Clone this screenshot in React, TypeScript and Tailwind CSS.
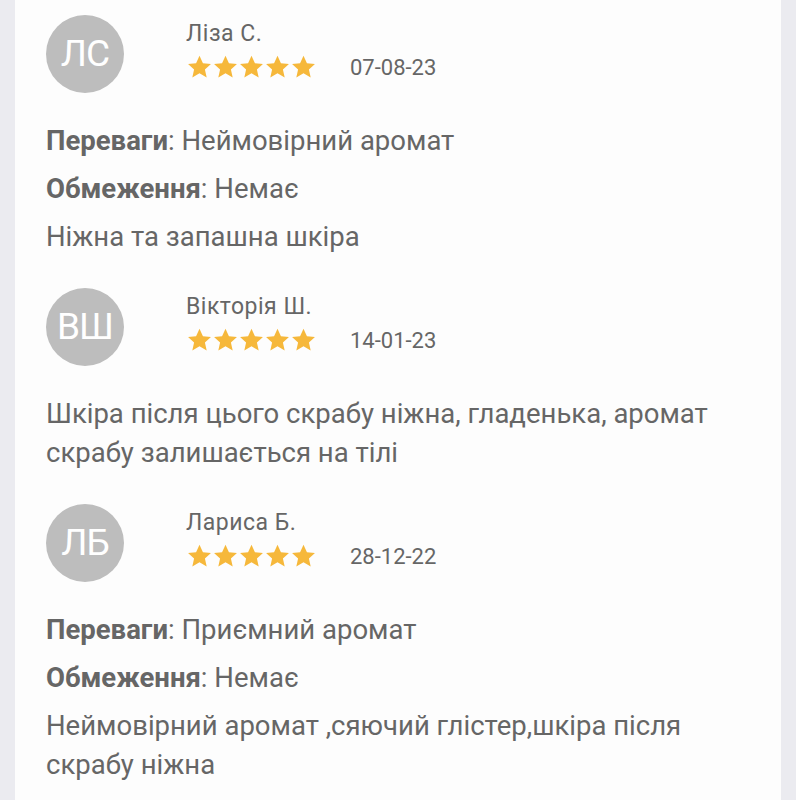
type Review = {
  initials: string;
  name: string;
  date: string;
  pros?: string;
  cons?: string;
  text: string[];
};

const reviews: Review[] = [
  {
    initials: "ЛС",
    name: "Ліза С.",
    date: "07-08-23",
    pros: "Неймовірний аромат",
    cons: "Немає",
    text: ["Ніжна та запашна шкіра"],
  },
  {
    initials: "ВШ",
    name: "Вікторія Ш.",
    date: "14-01-23",
    text: ["Шкіра після цього скрабу ніжна, гладенька, аромат", "скрабу залишається на тілі"],
  },
  {
    initials: "ЛБ",
    name: "Лариса Б.",
    date: "28-12-22",
    pros: "Приємний аромат",
    cons: "Немає",
    text: ["Неймовірний аромат ,сяючий глістер,шкіра після", "скрабу ніжна"],
  },
];

const Star = () => (
  <svg width="25" height="24" viewBox="0 0 24 23" className="shrink-0">
    <path
      d="M12 0.8l3.3 7.1 7.7 0.8-5.8 5.2 1.7 7.6L12 17.6l-6.9 3.9 1.7-7.6L1 8.7l7.7-0.8z"
      fill="#f6b83b"
    />
  </svg>
);

const ReviewItem = ({ review }: { review: Review }) => {
  return (
    <div>
      {/* header */}
      <div className="flex items-start">
        <div className="w-[78px] h-[78px] rounded-full bg-[#bdbdbd] flex items-center justify-center text-white text-[37px] tracking-[-1px] shrink-0">
          {review.initials}
        </div>
        <div className="ml-[62px] pt-[5px]">
          <div className="text-[23px] leading-[28px] tracking-[0.5px] text-[#666666]">{review.name}</div>
          <div className="flex items-center mt-[5px]">
            <div className="flex gap-[1px] ml-[1px]">
              <Star />
              <Star />
              <Star />
              <Star />
              <Star />
            </div>
            <span className="ml-[34px] text-[22px] leading-[26px] text-[#666666] mt-[2px]">
              {review.date}
            </span>
          </div>
        </div>
      </div>

      {/* body */}
      <div className="mt-[28px] flex flex-col gap-[9px] text-[27.5px] leading-[39px] text-[#666666]">
        {review.pros && (
          <p>
            <span className="font-bold">Переваги</span>: {review.pros}
          </p>
        )}
        {review.cons && (
          <p>
            <span className="font-bold">Обмеження</span>: {review.cons}
          </p>
        )}
        <p>
          {review.text.map((line, i) => (
            <span key={i} className="block">
              {line}
            </span>
          ))}
        </p>
      </div>
    </div>
  );
};

export default function App() {
  return (
    <div
      className="h-[800px] w-[796px] overflow-hidden bg-[#ebebf0] px-[15px]"
      style={{ fontFamily: "Roboto, 'Noto Sans', sans-serif" }}
    >
      <div className="h-full bg-[#fdfdfd] pl-[31px] pt-[15px] flex flex-col gap-[32px]">
        {reviews.map((r) => (
          <ReviewItem key={r.name} review={r} />
        ))}
      </div>
    </div>
  );
}
